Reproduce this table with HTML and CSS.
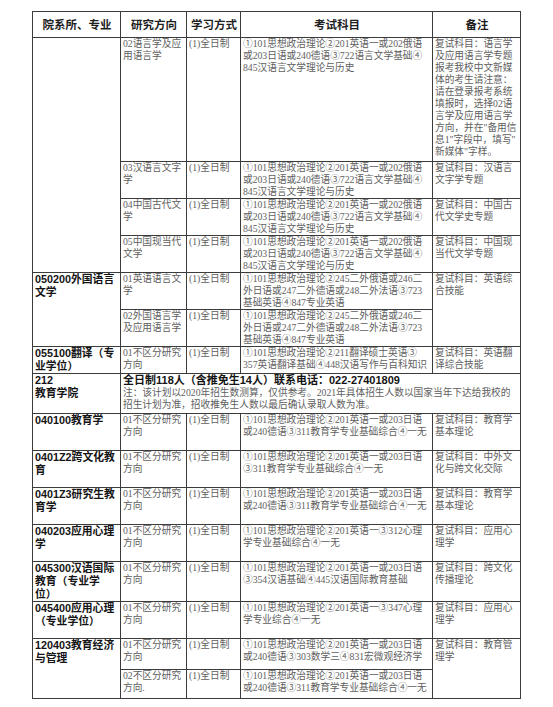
FILE: index.html
```html
<!DOCTYPE html>
<html lang="zh-CN">
<head>
<meta charset="utf-8">
<title>招生专业目录</title>
<link rel="stylesheet" href="styles.css">
</head>
<body>
<div class="page">
<table class="plan">
<colgroup><col class="c1"><col class="c2"><col class="c3"><col class="c4"><col class="c5"></colgroup>
<thead>
<tr class="hd"><th>院系所、专业</th><th>研究方向</th><th>学习方式</th><th>考试科目</th><th>备注</th></tr>
</thead>
<tbody>
<tr class="r10">
<td rowspan="4" class="major"></td>
<td>02语言学及应<br>用语言学</td>
<td>(1)全日制</td>
<td>①101思想政治理论②201英语一或202俄语<br>或203日语或240德语③722语言文学基础④<br>845汉语言文学理论与历史</td>
<td>复试科目：语言学<br>及应用语言学专题<br>报考我校中文新媒<br>体的考生请注意：<br>请在登录报考系统<br>填报时，选择02语<br>言学及应用语言学<br>方向，并在"备用信<br>息1"字段中，填写"<br>新媒体"字样。</td>
</tr>
<tr class="r3">
<td>03汉语言文字<br>学</td>
<td>(1)全日制</td>
<td>①101思想政治理论②201英语一或202俄语<br>或203日语或240德语③722语言文学基础④<br>845汉语言文学理论与历史</td>
<td>复试科目：汉语言<br>文字学专题</td>
</tr>
<tr class="r3">
<td>04中国古代文<br>学</td>
<td>(1)全日制</td>
<td>①101思想政治理论②201英语一或202俄语<br>或203日语或240德语③722语言文学基础④<br>845汉语言文学理论与历史</td>
<td>复试科目：中国古<br>代文学史专题</td>
</tr>
<tr class="r3">
<td>05中国现当代<br>文学</td>
<td>(1)全日制</td>
<td>①101思想政治理论②201英语一或202俄语<br>或203日语或240德语③722语言文学基础④<br>845汉语言文学理论与历史</td>
<td>复试科目：中国现<br>当代文学专题</td>
</tr>
<tr class="r3">
<td rowspan="2" class="major">050200外国语言<br>文学</td>
<td>01英语语言文<br>学</td>
<td>(1)全日制</td>
<td>①101思想政治理论②245二外俄语或246二<br>外日语或247二外德语或248二外法语③723<br>基础英语④847专业英语</td>
<td rowspan="2">复试科目：英语综<br>合技能</td>
</tr>
<tr class="r3">
<td>02外国语言学<br>及应用语言学</td>
<td>(1)全日制</td>
<td>①101思想政治理论②245二外俄语或246二<br>外日语或247二外德语或248二外法语③723<br>基础英语④847专业英语</td>
</tr>
<tr class="r2">
<td class="major">055100翻译（专<br>业学位）</td>
<td>01不区分研究<br>方向</td>
<td>(1)全日制</td>
<td>①101思想政治理论②211翻译硕士英语③<br>357英语翻译基础④448汉语写作与百科知识</td>
<td>复试科目：英语翻<br>译综合技能</td>
</tr>
<tr class="rs">
<td class="major">212<br>教育学院</td>
<td colspan="4"><div class="total">全日制118人（含推免生14人）联系电话：022-27401809</div>注：该计划以2020年招生数测算，仅供参考。2021年具体招生人数以国家当年下达给我校的<br>招生计划为准，招收推免生人数以最后确认录取人数为准。</td>
</tr>
<tr class="r3">
<td class="major">040100教育学</td>
<td>01不区分研究<br>方向</td>
<td>(1)全日制</td>
<td>①101思想政治理论②201英语一或203日语<br>或240德语③311教育学专业基础综合④一无</td>
<td>复试科目：教育学<br>基本理论</td>
</tr>
<tr class="r3">
<td class="major">0401Z2跨文化教<br>育</td>
<td>01不区分研究<br>方向</td>
<td>(1)全日制</td>
<td>①101思想政治理论②201英语一或203日语<br>③311教育学专业基础综合④一无</td>
<td>复试科目：中外文<br>化与跨文化交际</td>
</tr>
<tr class="r3">
<td class="major">0401Z3研究生教<br>育学</td>
<td>01不区分研究<br>方向</td>
<td>(1)全日制</td>
<td>①101思想政治理论②201英语一或203日语<br>或240德语③311教育学专业基础综合④一无</td>
<td>复试科目：教育学<br>基本理论</td>
</tr>
<tr class="r3">
<td class="major">040203应用心理<br>学</td>
<td>01不区分研究<br>方向</td>
<td>(1)全日制</td>
<td>①101思想政治理论②201英语一③312心理<br>学专业基础综合④一无</td>
<td>复试科目：应用心<br>理学</td>
</tr>
<tr class="r3">
<td class="major">045300汉语国际<br>教育（专业学<br>位）</td>
<td>01不区分研究<br>方向</td>
<td>(1)全日制</td>
<td>①101思想政治理论②201英语一或203日语<br>③354汉语基础④445汉语国际教育基础</td>
<td>复试科目：跨文化<br>传播理论</td>
</tr>
<tr class="r3">
<td class="major">045400应用心理<br>（专业学位）</td>
<td>01不区分研究<br>方向</td>
<td>(1)全日制</td>
<td>①101思想政治理论②201英语一③347心理<br>学专业综合④一无</td>
<td>复试科目：应用心<br>理学</td>
</tr>
<tr class="r2b">
<td rowspan="2" class="major">120403教育经济<br>与管理</td>
<td>01不区分研究<br>方向</td>
<td>(1)全日制</td>
<td>①101思想政治理论②201英语一或203日语<br>或240德语③303数学三④831宏微观经济学</td>
<td rowspan="2">复试科目：教育管<br>理学</td>
</tr>
<tr class="r2c">
<td>02不区分研究<br>方向.</td>
<td>(1)全日制</td>
<td>①101思想政治理论②201英语一或203日语<br>或240德语③311教育学专业基础综合④一无</td>
</tr>
</tbody>
</table>
</div>
</body>
</html>
```

FILE: styles.css
```css
html, body {
  margin: 0;
  padding: 0;
  background: #ffffff;
}

body {
  font-family: "Liberation Serif", "Noto Sans CJK SC", serif;
  font-size: 9.7px;
  color: #5e5e5e;
}

.page {
  padding: 11px 0 0 32px;
}

.plan {
  border-collapse: collapse;
  table-layout: fixed;
  width: 488px;
}

.c1 { width: 88px; }
.c2 { width: 66px; }
.c3 { width: 54px; }
.c4 { width: 192px; }
.c5 { width: 88px; }

.plan th,
.plan td {
  border: 1px solid #3c3c3c;
  padding: 0 1px 0 2px;
  line-height: 12px;
  white-space: nowrap;
  overflow: hidden;
  text-align: left;
  vertical-align: top;
}

.plan th {
  font-family: "Liberation Sans", "Noto Sans CJK SC", sans-serif;
  font-weight: 700;
  font-size: 11.5px;
  color: #1e1e1e;
  text-align: center;
  vertical-align: middle;
}

.hd > th { height: 25px; }
.r10 > td { height: 123px; }
.r3 > td { height: 36px; }
.r2 > td { height: 25px; }
.rs > td { height: 39px; }
.r2b > td { height: 30px; }
.r2c > td { height: 28px; }

.plan .major {
  font-family: "Liberation Sans", "Noto Sans CJK SC", sans-serif;
  font-weight: 700;
  font-size: 10.8px;
  line-height: 13px;
  color: #141414;
}

.total {
  font-family: "Liberation Sans", "Noto Sans CJK SC", sans-serif;
  font-weight: 700;
  font-size: 11px;
  line-height: 13px;
  color: #141414;
}
```
